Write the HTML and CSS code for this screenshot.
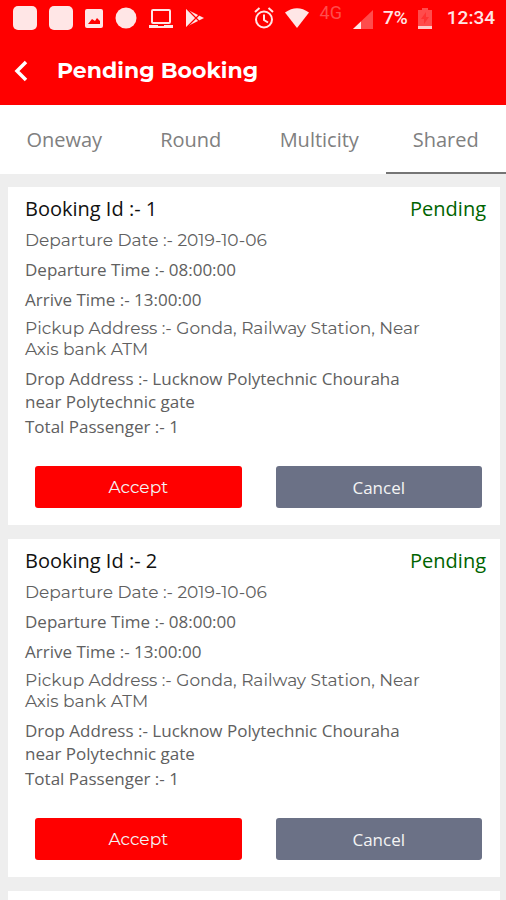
FILE: index.html
```html
<!DOCTYPE html>
<html lang="en">
<head>
<meta charset="utf-8">
<meta name="viewport" content="width=device-width, initial-scale=1">
<title>Pending Booking</title>
<link rel="stylesheet" href="styles.css">
</head>
<body>
<div class="screen">
  <header class="header">
    <div class="status">
      <div class="status-group status-apps">
        <svg width="24" height="26" viewBox="0 0 24 26"><rect x="0" y="1" width="24" height="24" rx="5" fill="#ffe6e6"/></svg>
        <svg width="24" height="26" viewBox="0 0 24 26"><rect x="0" y="1" width="24" height="24" rx="5" fill="#ffe6e6"/></svg>
        <svg width="18" height="26" viewBox="0 0 18 26"><path fill="#ffe6e6" fill-rule="evenodd" d="M2 4h14q2 0 2 2v15q0 2-2 2H2q-2 0-2-2V6q0-2 2-2zM3 19h12v-3l-3-3-2 3-3-2z"/></svg>
        <svg width="22" height="26" viewBox="0 0 22 26"><circle cx="11" cy="13" r="10.5" fill="#ffe6e6"/></svg>
        <svg width="24" height="26" viewBox="0 0 24 26"><rect x="3" y="5" width="18" height="13" rx="1" fill="none" stroke="#ffe6e6" stroke-width="2"/><path fill="#ffe6e6" d="M0 20h9v1h6v-1h9v3H0z"/></svg>
        <svg width="20" height="26" viewBox="0 0 20 26"><path fill="#ffe6e6" d="M1 4l18 9L1 22z"/><path d="M2 4l12 12M2 22L14 10" stroke="#f00" stroke-width="1.2"/></svg>
      </div>
      <div class="status-group status-system">
        <svg width="20" height="26" viewBox="0 0 20 26" fill="none" stroke="#ffe6e6" stroke-width="2"><circle cx="10" cy="14.5" r="8"/><path d="M10 9.500v5.500l4 2.500M1 7l4.500-4M19 7l-4.500-4"/></svg>
        <svg width="26" height="26" viewBox="0 0 26 26"><path fill="#ffe6e6" d="M1 7.500Q13-1 25 7.500L13 23z"/></svg>
        <span class="network">4G</span>
        <svg width="21" height="26" viewBox="0 0 21 26"><path fill="#ff4c4c" d="M21 5v19H1z"/><path fill="#ffe6e6" d="M9 16.500V24H1z"/></svg>
        <span class="percent">7%</span>
        <svg width="14" height="26" viewBox="0 0 14 26"><path fill="#ff4c4c" d="M0 5h4V3h6v2h4v16H0z"/><path fill="#f33" d="M8 7l-5 7h3v5l5-7H8z"/><path fill="#ffcaca" d="M0 21h14v3H0z"/></svg>
        <time class="clock">12:34</time>
      </div>
    </div>
    <div class="titlebar">
      <button class="back" type="button" aria-label="Back"><svg width="14" height="22" viewBox="0 0 14 22"><path d="M12 2L3 11l9 9" fill="none" stroke="#fff" stroke-width="3.5"/></svg></button>
      <h1 class="title">Pending Booking</h1>
    </div>
  </header>
  <nav class="tabs">
    <a class="tab" href="#oneway">Oneway</a>
    <a class="tab" href="#round">Round</a>
    <a class="tab" href="#multicity">Multicity</a>
    <a class="tab tab-active" href="#shared" aria-current="page">Shared</a>
  </nav>
  <main class="list">
    <article class="card">
      <div class="card-head"><h2 class="booking">Booking Id :- 1</h2><span class="state">Pending</span></div>
      <p class="detail wide">Departure Date :- 2019-10-06</p>
      <p class="detail">Departure Time :- 08:00:00</p>
      <p class="detail">Arrive Time :- 13:00:00</p>
      <p class="detail wide">Pickup Address :- Gonda, Railway Station, Near Axis bank ATM</p>
      <p class="detail">Drop Address :- Lucknow Polytechnic Chouraha near Polytechnic gate</p>
      <p class="detail total">Total Passenger :- 1</p>
      <div class="actions"><button class="btn accept" type="button">Accept</button><button class="btn cancel" type="button">Cancel</button></div>
    </article>
    <article class="card">
      <div class="card-head"><h2 class="booking">Booking Id :- 2</h2><span class="state">Pending</span></div>
      <p class="detail wide">Departure Date :- 2019-10-06</p>
      <p class="detail">Departure Time :- 08:00:00</p>
      <p class="detail">Arrive Time :- 13:00:00</p>
      <p class="detail wide">Pickup Address :- Gonda, Railway Station, Near Axis bank ATM</p>
      <p class="detail">Drop Address :- Lucknow Polytechnic Chouraha near Polytechnic gate</p>
      <p class="detail total">Total Passenger :- 1</p>
      <div class="actions"><button class="btn accept" type="button">Accept</button><button class="btn cancel" type="button">Cancel</button></div>
    </article>
    <article class="card"></article>
  </main>
</div>
</body>
</html>
```
FILE: styles.css
```css
* { box-sizing: border-box; }
body {
  margin: 0;
  background: #eee;
  color: #606060;
  font-family: "Open Sans", "Noto Sans", sans-serif;
}
h1, h2, p { margin: 0; font-weight: 400; }
svg { display: block; flex: none; }

.screen { height: 100vh; display: flex; flex-direction: column; overflow: hidden; }

.header { flex: none; background: #f00; color: #fff; }
.status { display: flex; justify-content: space-between; padding: 4px 11px 6px 13px; }
.status-group { display: flex; align-items: center; }
.status-apps { gap: 12px; }
.status-system {
  gap: 10px;
  color: #ffe6e6;
  font: 500 19px/28px Roboto, sans-serif;
}
.network { align-self: flex-start; color: #ff4c4c; font-size: 18px; font-weight: 400; line-height: 18px; }
.clock { margin-left: 5px; }

.titlebar { display: flex; align-items: center; height: 67px; padding: 0 14px 1px; gap: 29px; }
.back { padding: 0; border: 0; background: none; cursor: pointer; }
.title { font: 700 22px/28px Montserrat, Inter, sans-serif; }

.tabs { flex: none; display: grid; grid-template-columns: 32fr 31fr 33fr 30fr; background: #fff; }
.tab {
  padding: 21px 0 19px;
  border-bottom: 2px solid transparent;
  color: #808080;
  font-size: 20px;
  line-height: 27px;
  text-align: center;
  text-decoration: none;
}
.tab-active { border-color: #757575; }

.list { display: flex; flex-direction: column; gap: 14px; padding: 13px 6px 0 8px; }
.card { flex: none; min-height: 338px; padding: 8px 14px 17px 17px; background: #fff; }
.card-head { display: flex; justify-content: space-between; font-size: 20px; line-height: 28px; }
.booking { color: #111; font-size: 20px; }
.state { color: #006400; }
.detail { max-width: 410px; margin-top: 7px; font-size: 17px; line-height: 23px; }
.wide { font-family: Montserrat, Inter, sans-serif; line-height: 21px; }
.total { margin-top: 2px; }

.actions { display: grid; grid-template-columns: 1fr 1fr; gap: 34px; margin-top: 28px; padding: 0 4px 0 10px; }
.btn {
  height: 42px;
  padding: 0;
  border: 0;
  border-radius: 3px;
  color: #f4f4f4;
  font: 17px/23px "Open Sans", sans-serif;
  cursor: pointer;
}
.accept { background: #f00; font-family: Montserrat, Inter, sans-serif; }
.cancel { background: #6b7186; }
```
